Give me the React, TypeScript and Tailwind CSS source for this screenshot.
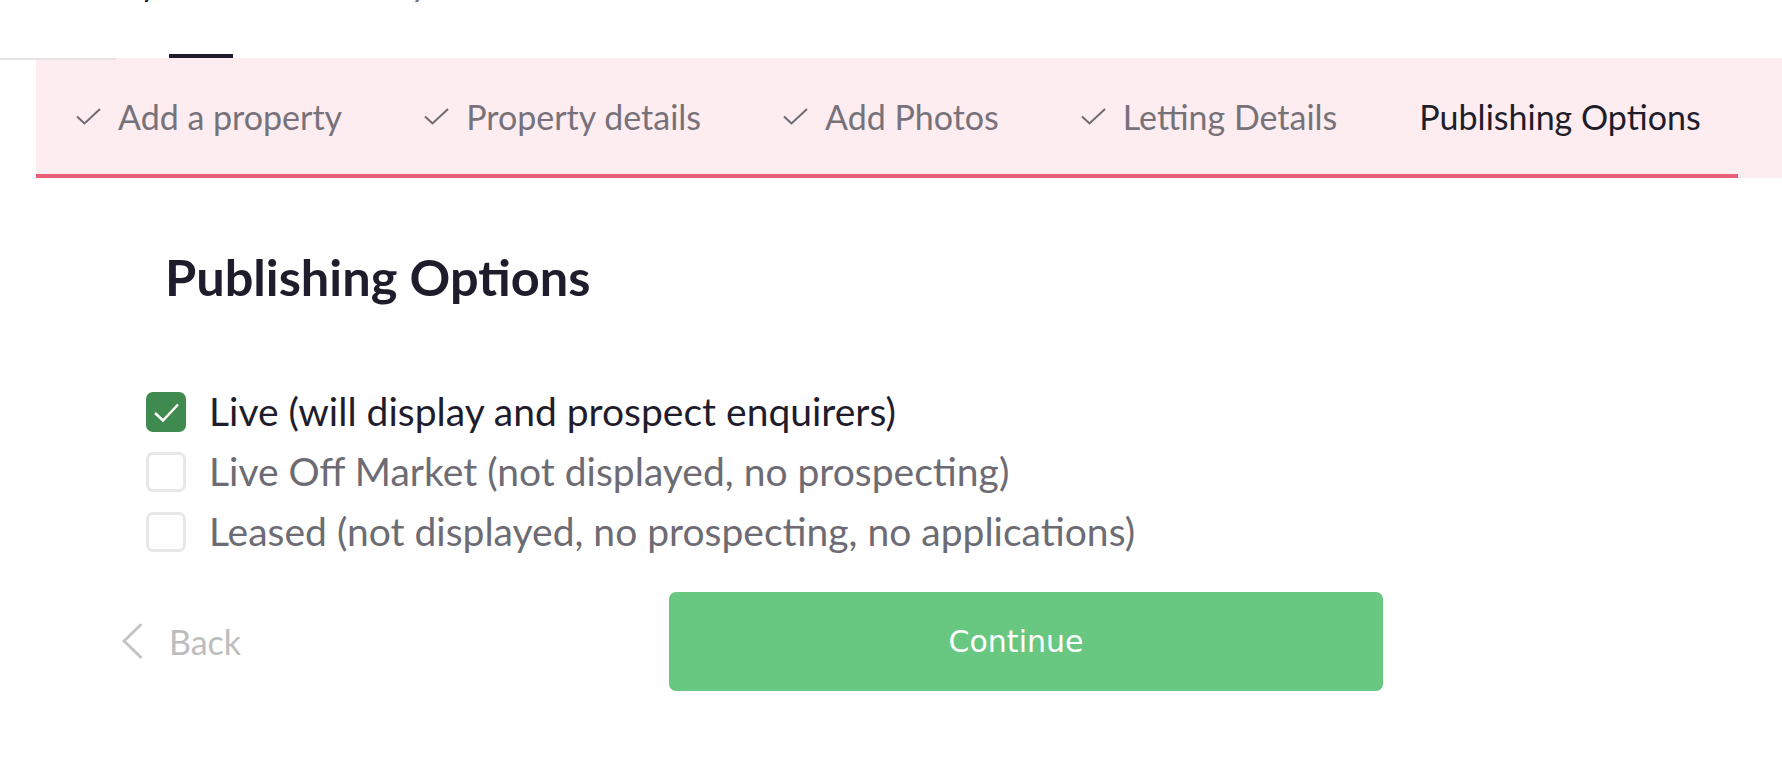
import React from "react";

const TabCheck = () => (
  <svg width="25" height="17" viewBox="0 0 25 17" fill="none" className="shrink-0">
    <path d="M1 8.5 L8.5 15.5 L24 1" stroke="#6f6a72" strokeWidth="2" />
  </svg>
);

const Tab = ({ label, done }: { label: string; done: boolean }) => (
  <div className="flex items-center gap-[17px] shrink-0">
    {done && <TabCheck />}
    <span className={done ? "text-[#77727a]" : "text-[#1f1d2b]"}>{label}</span>
  </div>
);

const Option = ({ label, checked }: { label: string; checked: boolean }) => (
  <div className="flex items-center gap-[23px] h-[40px]">
    {checked ? (
      <div className="w-[40px] h-[40px] rounded-[7px] bg-[#3f8a4e] flex items-center justify-center shrink-0">
        <svg width="40" height="40" viewBox="0 0 40 40" fill="none">
          <path d="M9 21 L17 28.5 L32 12.5" stroke="#ffffff" strokeWidth="2.5" />
        </svg>
      </div>
    ) : (
      <div className="w-[40px] h-[40px] rounded-[7px] border-[3px] border-[#e7e7e9] bg-white shrink-0" />
    )}
    <span className={checked ? "text-[#1f1d2b]" : "text-[#6d6b73]"}>{label}</span>
  </div>
);

export default function App() {
  return (
    <div className="w-[1782px] h-[778px] bg-white overflow-hidden" style={{ fontFamily: "Lato, 'Noto Sans', sans-serif" }}>
      {/* top nav (cut off) */}
      <div className="relative h-[58px] flex flex-col">
        <div className="flex text-[34px] text-[#1f1d2b] leading-none -mt-[34px] pl-[18px]">
          <span>Summary</span>
          <span className="ml-[148px] text-[#77727a]">Tenancy</span>
        </div>
        <div className="absolute left-[169px] bottom-0 w-[64px] h-[4px] bg-[#1f1d2b]" />
        <div className="absolute left-0 -bottom-[2px] w-[116px] h-[2px] bg-[#e6e2e4] z-10" />
      </div>

      {/* stepper */}
      <div className="pl-[36px]">
        <div className="bg-[#fdedf0] h-[120px] flex flex-col">
          <div className="flex-1 flex items-center pl-[40px] gap-[82px] text-[34px] whitespace-nowrap">
            <Tab label="Add a property" done />
            <Tab label="Property details" done />
            <Tab label="Add Photos" done />
            <Tab label="Letting Details" done />
            <Tab label="Publishing Options" done={false} />
            <span className="text-[#b9b4bb]">Review</span>
          </div>
          <div className="w-[1702px] h-[4px] bg-[#e85f76]" />
        </div>
      </div>

      {/* content */}
      <div className="pt-[74px] flex flex-col">
        <h1 className="ml-[165px] text-[50.5px] font-bold text-[#1f1d2b] leading-none">Publishing Options</h1>
        <div className="ml-[146px] mt-[89px] flex flex-col gap-[20px] text-[39px]">
          <Option label="Live (will display and prospect enquirers)" checked />
          <Option label="Live Off Market (not displayed, no prospecting)" checked={false} />
          <Option label="Leased (not displayed, no prospecting, no applications)" checked={false} />
        </div>
        <div className="mt-[40px] flex items-center">
          <div className="ml-[121px] w-[548px] flex items-center gap-[26px] text-[34px] text-[#bdbdbd]">
            <svg width="22" height="36" viewBox="0 0 22 36" fill="none">
              <path d="M19.5 2 L3 18 L19.5 34" stroke="#c4c4c4" strokeWidth="3" strokeLinecap="round" strokeLinejoin="round" />
            </svg>
            <span>Back</span>
          </div>
          <button className="w-[714px] h-[99px] rounded-[7px] bg-[#68c781] text-white text-[30px] flex items-center justify-center pr-[20px]" style={{ fontFamily: "'DejaVu Sans', sans-serif" }}>
            Continue
          </button>
        </div>
      </div>
    </div>
  );
}
